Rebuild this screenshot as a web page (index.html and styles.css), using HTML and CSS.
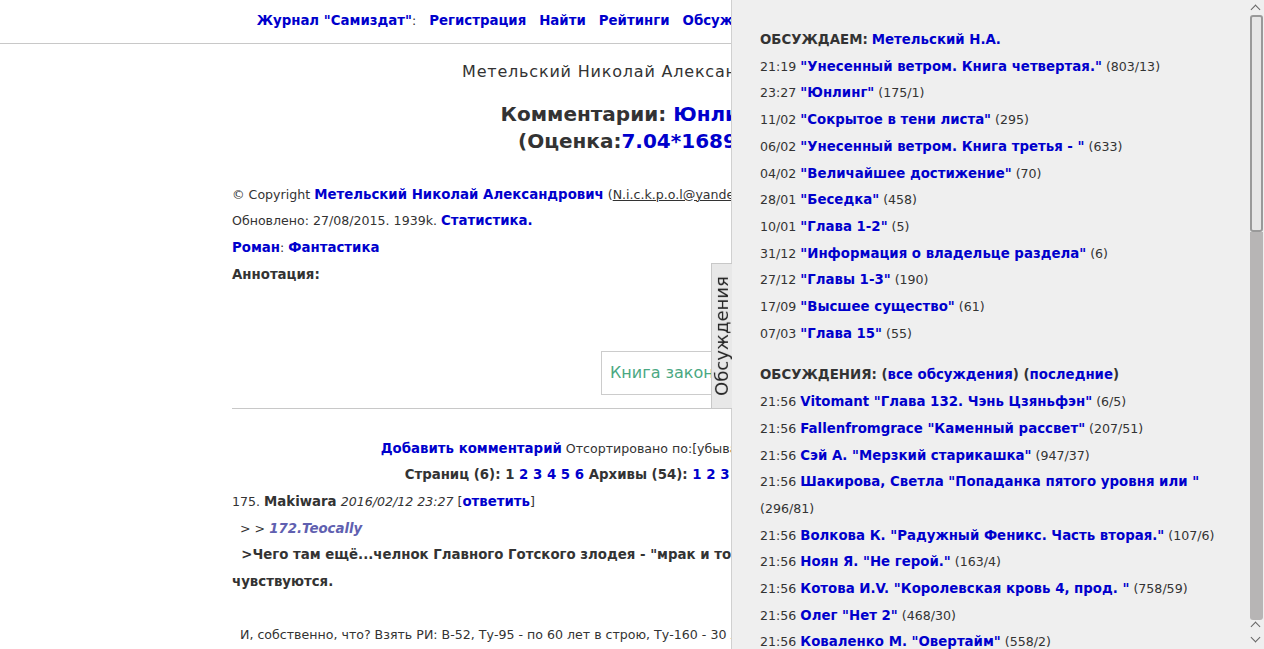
FILE: index.html
```html
<!DOCTYPE html>
<html lang="ru">
<head>
<meta charset="utf-8">
<title>Комментарии: Юнлинг</title>
<link rel="stylesheet" href="styles.css">
</head>
<body>
<div class="page">
  <nav class="topnav">
    <a href="#">Журнал "Самиздат"</a>: <a href="#">Регистрация</a> <a href="#">Найти</a> <a href="#">Рейтинги</a> <a href="#">Обсуждения</a> <a href="#">Новинки</a> <a href="#">Обзоры</a> <a href="#">Помощь</a>
  </nav>
  <main class="content">
    <div class="author">Метельский Николай Александрович</div>
    <h2 class="title">Комментарии: <a href="#">Юнлинг</a><br>(Оценка:<a href="#">7.04*1689</a>)</h2>
    <div class="info">
      <div>© Copyright <a href="#">Метельский Николай Александрович</a> (<u>N.i.c.k.p.o.l@yandex.ru</u>)</div>
      <div>Обновлено: 27/08/2015. 1939k. <a href="#">Статистика.</a></div>
      <div><a href="#">Роман</a>: <a href="#">Фантастика</a></div>
      <div><b>Аннотация:</b></div>
    </div>
    <div class="promo"><span>Книга законов Юнлинга</span></div>
    <hr class="sep">
    <div class="center"><a href="#">Добавить комментарий</a> Отсортировано по:[убыванию] [ответам] [дате]</div>
    <div class="center"><b>Страниц (6): 1 <a href="#">2</a> <a href="#">3</a> <a href="#">4</a> <a href="#">5</a> <a href="#">6</a> Архивы (54): <a href="#">1</a> <a href="#">2</a> <a href="#">3</a> <a href="#">4</a> <a href="#">5</a> <a href="#">6</a> <a href="#">7</a> <a href="#">8</a> <a href="#">9</a> <a href="#">10</a> <a href="#">11</a></b></div>
    <div class="comment">
      <div>175. <b>Makiwara</b> <i>2016/02/12 23:27</i> [<a href="#">ответить</a>]</div>
      <div>&nbsp;&nbsp;&gt; &gt; <a href="#" class="visited">172.Teocally</a></div>
      <div class="quote">&nbsp;&nbsp;&gt;Чего там ещё...челнок Главного Готского злодея - "мрак и тоска" - в каждой строчке его речи чувствуются.</div>
      <div>&nbsp;</div>
      <div>&nbsp;&nbsp;И, собственно, что? Взять РИ: В-52, Ту-95 - по 60 лет в строю, Ту-160 - 30 лет.</div>
    </div>
  </main>
</div>

<aside class="panel">
  <div class="tab"><span>Обсуждения</span></div>
  <div class="panel-body">
    <div class="list">
      <div><b>ОБСУЖДАЕМ:</b> <a href="#">Метельский Н.А.</a></div>
      <div>21:19 <a href="#">"Унесенный ветром. Книга четвертая."</a> (803/13)</div>
      <div>23:27 <a href="#">"Юнлинг"</a> (175/1)</div>
      <div>11/02 <a href="#">"Сокрытое в тени листа"</a> (295)</div>
      <div>06/02 <a href="#">"Унесенный ветром. Книга третья - "</a> (633)</div>
      <div>04/02 <a href="#">"Величайшее достижение"</a> (70)</div>
      <div>28/01 <a href="#">"Беседка"</a> (458)</div>
      <div>10/01 <a href="#">"Глава 1-2"</a> (5)</div>
      <div>31/12 <a href="#">"Информация о владельце раздела"</a> (6)</div>
      <div>27/12 <a href="#">"Главы 1-3"</a> (190)</div>
      <div>17/09 <a href="#">"Высшее существо"</a> (61)</div>
      <div>07/03 <a href="#">"Глава 15"</a> (55)</div>
    </div>
    <div class="list second">
      <div><b>ОБСУЖДЕНИЯ: (<a href="#">все обсуждения</a>) (<a href="#">последние</a>)</b></div>
      <div>21:56 <a href="#">Vitomant "Глава 132. Чэнь Цзяньфэн"</a> (6/5)</div>
      <div>21:56 <a href="#">Fallenfromgrace "Каменный рассвет"</a> (207/51)</div>
      <div>21:56 <a href="#">Сэй А. "Мерзкий старикашка"</a> (947/37)</div>
      <div>21:56 <a href="#">Шакирова, Светла "Попаданка пятого уровня или "</a> (296/81)</div>
      <div>21:56 <a href="#">Волкова К. "Радужный Феникс. Часть вторая."</a> (107/6)</div>
      <div>21:56 <a href="#">Ноян Я. "Не герой."</a> (163/4)</div>
      <div>21:56 <a href="#">Котова И.V. "Королевская кровь 4, прод. "</a> (758/59)</div>
      <div>21:56 <a href="#">Олег "Нет 2"</a> (468/30)</div>
      <div>21:56 <a href="#">Коваленко М. "Овертайм"</a> (558/2)</div>
    </div>
  </div>
  <div class="scrollbar">
    <div class="arrow up"></div>
    <div class="track">
      <div class="thumb"></div>
      <div class="rest"></div>
    </div>
    <div class="arrow up small"></div>
    <div class="arrow down"></div>
  </div>
</aside>
</body>
</html>
```

FILE: styles.css
```css
html, body {
  margin: 0;
  padding: 0;
  background: #fff;
}
body {
  font-family: "DejaVu Sans", Verdana, sans-serif;
  font-size: 12.6px;
  line-height: 26.7px;
  color: #333;
  overflow: hidden;
  height: 649px;
}
a {
  color: #0000cc;
  font-weight: bold;
  font-size: 13.33px;
  line-height: 1;
  text-decoration: none;
}
b { font-size: 13.33px; line-height: 1; }
i, u { line-height: 1; }
b a { font-size: inherit; }
.topnav {
  text-align: center;
  padding: 8px 0 8px;
  border-bottom: 1px solid #c8c8c8;
  word-spacing: 9px;
  white-space: nowrap;
}
.topnav a { word-spacing: 0; }
.content {
  width: 800px;
  margin: 0 auto;
}
.author {
  text-align: center;
  font-size: 16px;
  letter-spacing: 0.8px;
  margin-top: 14px;
  line-height: 27px;
}
.title {
  text-align: center;
  font-size: 20px;
  line-height: 27px;
  margin: 16px 0 0;
  color: #333;
}
.title a { font-size: inherit; }
.info { margin-top: 27px; }
.promo {
  margin: 62px 0 0 369px;
  width: 300px;
  height: 44px;
  border: 1px solid #ccc;
  display: flex;
  align-items: center;
  padding-left: 8px;
  box-sizing: border-box;
  font-size: 16px;
  line-height: 20px;
  color: #4aa882;
  white-space: nowrap;
  overflow: hidden;
}
.sep {
  border: 0;
  border-top: 1px solid #c8c8c8;
  margin: 13px 0 27px;
}
.center { text-align: center; white-space: nowrap; }
.visited {
  font-style: italic;
  color: #6060b0;
}
.quote { font-weight: bold; font-size: 13.33px; }

/* side panel overlay */
.panel {
  position: fixed;
  top: 0;
  right: 0;
  bottom: 0;
  width: 532px;
  background: #efefef;
  border-left: 1px solid #d0d0d0;
  display: flex;
}
.tab {
  position: absolute;
  left: -21px;
  top: 263px;
  width: 20px;
  height: 144px;
  background: #e8e8e8;
  border: 1px solid #c8c8c8;
  border-right: 0;
  display: flex;
  align-items: center;
  justify-content: center;
}
.tab span {
  display: block;
  transform: rotate(-90deg);
  font-size: 18px;
  color: #222;
  white-space: nowrap;
  line-height: 20px;
}
.panel-body {
  flex: 1;
  padding: 27px 20px 0 28px;
  overflow: hidden;
}
.list.second { margin-top: 15px; }
.scrollbar {
  width: 17px;
  display: flex;
  flex-direction: column;
  align-items: center;
}
.arrow {
  width: 6px;
  height: 6px;
  border-left: 1px solid #666;
  border-top: 1px solid #666;
  transform: rotate(45deg);
}
.arrow.up { margin-top: 6px; }
.arrow.small { margin-top: 3px; }
.arrow.down {
  transform: rotate(225deg);
  margin-top: 4px;
  margin-bottom: 8px;
}
.track {
  width: 13px;
  flex: 1;
  margin-top: 2px;
  display: flex;
  flex-direction: column;
  margin-left: 1px;
}
.thumb {
  height: 217px;
  box-sizing: border-box;
  border: 2px solid #999;
  border-radius: 3px;
  background: #e6e6e6;
}
.rest {
  flex: 1;
  background: #b7b5b5;
  border-radius: 0 0 3px 3px;
}
```
